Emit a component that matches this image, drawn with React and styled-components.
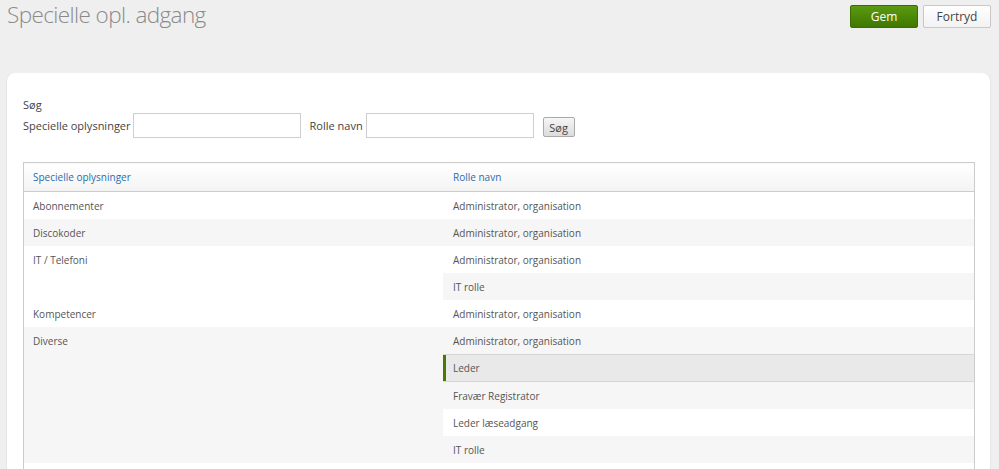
import styled, { createGlobalStyle, css } from "styled-components";

const GlobalStyle = createGlobalStyle`
  html, body {
    margin: 0;
    padding: 0;
    background: #efefef;
    font-family: "Open Sans", "Liberation Sans", sans-serif;
    font-size: 11px;
    color: #555;
  }
`;

const rows = [
  { info: "Abonnementer", roles: ["Administrator, organisation"] },
  { info: "Discokoder", roles: ["Administrator, organisation"] },
  { info: "IT / Telefoni", roles: ["Administrator, organisation", "IT rolle"] },
  { info: "Kompetencer", roles: ["Administrator, organisation"] },
  {
    info: "Diverse",
    roles: [
      "Administrator, organisation",
      "Leder",
      "Fravær Registrator",
      "Leder læseadgang",
      "IT rolle",
    ],
  },
];

export default function App() {
  return (
    <Page>
      <GlobalStyle />
      <TopBar>
        <Title>Specielle opl. adgang</Title>
        <Actions>
          <ActionButton $primary>Gem</ActionButton>
          <ActionButton>Fortryd</ActionButton>
        </Actions>
      </TopBar>
      <Card>
        <SearchForm>
          <SearchTitle>Søg</SearchTitle>
          <SearchRow>
            <Label>Specielle oplysninger</Label>
            <Input />
            <Label $gap>Rolle navn</Label>
            <Input />
            <SmallButton>Søg</SmallButton>
          </SearchRow>
        </SearchForm>
        <Table>
          <thead>
            <tr>
              <Th $first>Specielle oplysninger</Th>
              <Th>Rolle navn</Th>
            </tr>
          </thead>
          <tbody>
            {rows.map((r) =>
              r.roles.map((role, i) => (
                <Row key={r.info + i}>
                  {i === 0 && <InfoCell rowSpan={r.roles.length}>{r.info}</InfoCell>}
                  <RoleCell $selected={r.info === "Diverse" && role === "Leder"}>{role}</RoleCell>
                </Row>
              ))
            )}
            <Row>
              <InfoCell />
              <RoleCell />
            </Row>
          </tbody>
        </Table>
      </Card>
    </Page>
  );
}

const Page = styled.div`
  display: flex;
  flex-direction: column;
  padding: 0 9px 0 7px;
`;

const TopBar = styled.div`
  display: flex;
  justify-content: space-between;
  align-items: flex-start;
  height: 73px;
`;

const Title = styled.h1`
  margin: 0;
  font-weight: 300;
  font-size: 22.5px;
  line-height: 29px;
  color: #8a8a8a;
  letter-spacing: -0.6px;
`;

const Actions = styled.div`
  display: flex;
  gap: 5px;
  padding-top: 5px;
  margin-right: -1px;
`;

const ActionButton = styled.button`
  width: 68px;
  height: 23px;
  border-radius: 2px;
  font-family: "Open Sans", "Liberation Sans", sans-serif;
  font-size: 12px;
  padding: 0;
  cursor: pointer;
  ${(p) =>
    p.$primary
      ? css`
          background: linear-gradient(#5b9a12, #3f7800);
          border: 1px solid #3a6d00;
          color: #fff;
        `
      : css`
          background: linear-gradient(#ffffff, #f2f2f2);
          border: 1px solid #c8c8c8;
          color: #444;
        `}
`;

const Card = styled.div`
  background: #fff;
  border-radius: 8px 8px 0 0;
  padding: 24px 15px 20px 16px;
  box-shadow: -1px 0 0 #e6e6e6, 1px 0 0 #e6e6e6;
`;

const SearchForm = styled.div`
  display: flex;
  flex-direction: column;
  margin-bottom: 24px;
`;

const SearchTitle = styled.div`
  line-height: 16px;
  color: #444;
`;

const SearchRow = styled.div`
  display: flex;
  align-items: center;
`;

const Label = styled.span`
  color: #444;
  margin-left: ${(p) => (p.$gap ? "9px" : "0")};
  margin-right: ${(p) => (p.$gap ? "3px" : "2px")};
`;

const Input = styled.input`
  width: 168px;
  height: 25px;
  box-sizing: border-box;
  border: 1px solid #cfcfcf;
  background: #fff;
  margin: 0;
`;

const SmallButton = styled.button`
  margin-left: 9px;
  margin-top: 3px;
  width: 32px;
  height: 20px;
  padding: 0;
  font-family: "Open Sans", "Liberation Sans", sans-serif;
  font-size: 11px;
  color: #444;
  background: linear-gradient(#f6f6f6, #dcdcdc);
  border: 1px solid #aaa;
  border-radius: 2px;
`;

const Table = styled.table`
  width: 100%;
  border-collapse: collapse;
  border: 1px solid #ccc;
  font-size: 10px;
`;

const Th = styled.th`
  text-align: left;
  font-weight: 400;
  color: #2b6cb0;
  height: 28px;
  padding: 0 ${(p) => (p.$first ? "9px 0 9px" : "10px")};
  width: ${(p) => (p.$first ? "401px" : "auto")};
  background: linear-gradient(#ffffff, #f3f3f3);
  border-bottom: 1px solid #ccc;
`;

const Row = styled.tr`
  &:nth-child(even) td {
    background: #f6f6f6;
  }
`;

const cell = css`
  height: 27px;
  padding: 2px 10px 0;
  line-height: 25px;
  vertical-align: top;
  box-sizing: border-box;
`;

const InfoCell = styled.td`
  ${cell}
  padding-left: 9px;
`;

const RoleCell = styled.td`
  ${cell}
  ${(p) =>
    p.$selected &&
    css`
      && {
        background: #e9e9e9;
      }
      border-top: 1px solid #d6d6d6;
      border-bottom: 1px solid #d6d6d6;
      box-shadow: inset 3px 0 0 #467a00;
      padding-top: 1px;
    `}
`;
